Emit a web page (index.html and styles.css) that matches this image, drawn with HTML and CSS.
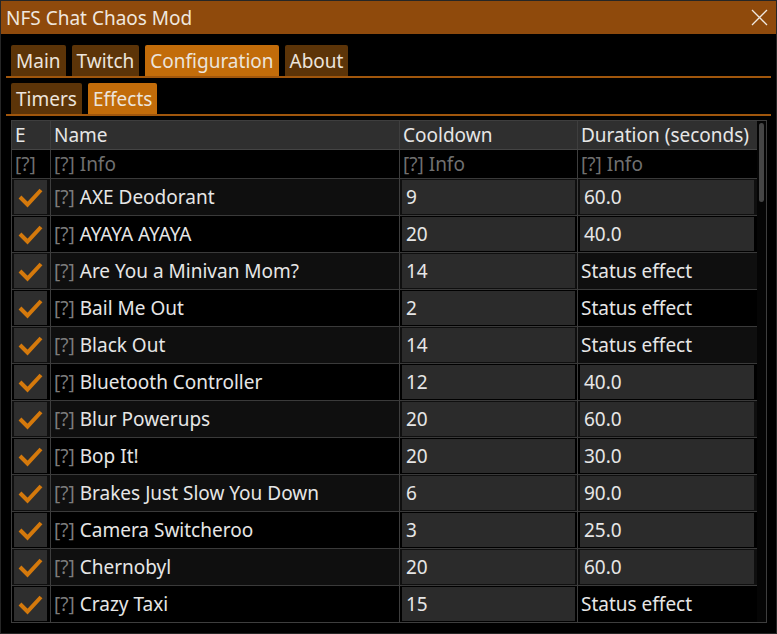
FILE: index.html
```html
<!DOCTYPE html>
<html>
<head>
<meta charset="utf-8">
<link rel="stylesheet" href="styles.css">
</head>
<body>
<div class="window">
  <div class="titlebar">
    <span class="title">NFS Chat Chaos Mod</span>
    <svg class="close" width="17" height="17" viewBox="0 0 17 17"><path d="M1 1 L16 16 M16 1 L1 16" stroke="#f0e8e0" stroke-width="1.3" fill="none"/></svg>
  </div>
  <div class="content">
    <div class="tabbar">
      <div class="tab">Main</div>
      <div class="tab">Twitch</div>
      <div class="tab active">Configuration</div>
      <div class="tab">About</div>
    </div>
    <div class="tabbar sub">
      <div class="tab">Timers</div>
      <div class="tab active">Effects</div>
    </div>
    <div class="table">
      <div class="grid">
        <div class="row head">
          <div class="c">E</div><div class="c">Name</div><div class="c">Cooldown</div><div class="c last">Duration (seconds)</div>
        </div>
        <div class="row info">
          <div class="c">[?]</div><div class="c">[?] Info</div><div class="c">[?] Info</div><div class="c last">[?] Info</div>
        </div>

        <div class="row alt">
          <div class="c cb"><span class="check"><svg viewBox="0 0 33 34" width="33" height="34"><polyline points="6,17 13.5,24.5 27,10" /></svg></span></div>
          <div class="c"><span class="q">[?]</span>AXE Deodorant</div>
          <div class="c inp"><span class="field">9</span></div>
          <div class="c inp last"><span class="field">60.0</span></div>
        </div>
        <div class="row">
          <div class="c cb"><span class="check"><svg viewBox="0 0 33 34" width="33" height="34"><polyline points="6,17 13.5,24.5 27,10" /></svg></span></div>
          <div class="c"><span class="q">[?]</span>AYAYA AYAYA</div>
          <div class="c inp"><span class="field">20</span></div>
          <div class="c inp last"><span class="field">40.0</span></div>
        </div>
        <div class="row alt">
          <div class="c cb"><span class="check"><svg viewBox="0 0 33 34" width="33" height="34"><polyline points="6,17 13.5,24.5 27,10" /></svg></span></div>
          <div class="c"><span class="q">[?]</span>Are You a Minivan Mom?</div>
          <div class="c inp"><span class="field">14</span></div>
          <div class="c last">Status effect</div>
        </div>
        <div class="row">
          <div class="c cb"><span class="check"><svg viewBox="0 0 33 34" width="33" height="34"><polyline points="6,17 13.5,24.5 27,10" /></svg></span></div>
          <div class="c"><span class="q">[?]</span>Bail Me Out</div>
          <div class="c inp"><span class="field">2</span></div>
          <div class="c last">Status effect</div>
        </div>
        <div class="row alt">
          <div class="c cb"><span class="check"><svg viewBox="0 0 33 34" width="33" height="34"><polyline points="6,17 13.5,24.5 27,10" /></svg></span></div>
          <div class="c"><span class="q">[?]</span>Black Out</div>
          <div class="c inp"><span class="field">14</span></div>
          <div class="c last">Status effect</div>
        </div>
        <div class="row">
          <div class="c cb"><span class="check"><svg viewBox="0 0 33 34" width="33" height="34"><polyline points="6,17 13.5,24.5 27,10" /></svg></span></div>
          <div class="c"><span class="q">[?]</span>Bluetooth Controller</div>
          <div class="c inp"><span class="field">12</span></div>
          <div class="c inp last"><span class="field">40.0</span></div>
        </div>
        <div class="row alt">
          <div class="c cb"><span class="check"><svg viewBox="0 0 33 34" width="33" height="34"><polyline points="6,17 13.5,24.5 27,10" /></svg></span></div>
          <div class="c"><span class="q">[?]</span>Blur Powerups</div>
          <div class="c inp"><span class="field">20</span></div>
          <div class="c inp last"><span class="field">60.0</span></div>
        </div>
        <div class="row">
          <div class="c cb"><span class="check"><svg viewBox="0 0 33 34" width="33" height="34"><polyline points="6,17 13.5,24.5 27,10" /></svg></span></div>
          <div class="c"><span class="q">[?]</span>Bop It!</div>
          <div class="c inp"><span class="field">20</span></div>
          <div class="c inp last"><span class="field">30.0</span></div>
        </div>
        <div class="row alt">
          <div class="c cb"><span class="check"><svg viewBox="0 0 33 34" width="33" height="34"><polyline points="6,17 13.5,24.5 27,10" /></svg></span></div>
          <div class="c"><span class="q">[?]</span>Brakes Just Slow You Down</div>
          <div class="c inp"><span class="field">6</span></div>
          <div class="c inp last"><span class="field">90.0</span></div>
        </div>
        <div class="row">
          <div class="c cb"><span class="check"><svg viewBox="0 0 33 34" width="33" height="34"><polyline points="6,17 13.5,24.5 27,10" /></svg></span></div>
          <div class="c"><span class="q">[?]</span>Camera Switcheroo</div>
          <div class="c inp"><span class="field">3</span></div>
          <div class="c inp last"><span class="field">25.0</span></div>
        </div>
        <div class="row alt">
          <div class="c cb"><span class="check"><svg viewBox="0 0 33 34" width="33" height="34"><polyline points="6,17 13.5,24.5 27,10" /></svg></span></div>
          <div class="c"><span class="q">[?]</span>Chernobyl</div>
          <div class="c inp"><span class="field">20</span></div>
          <div class="c inp last"><span class="field">60.0</span></div>
        </div>
        <div class="row final">
          <div class="c cb"><span class="check"><svg viewBox="0 0 33 34" width="33" height="34"><polyline points="6,17 13.5,24.5 27,10" /></svg></span></div>
          <div class="c"><span class="q">[?]</span>Crazy Taxi</div>
          <div class="c inp"><span class="field">15</span></div>
          <div class="c last">Status effect</div>
        </div>
      </div>
      <div class="scrollbar"><div class="grab"></div></div>
    </div>
  </div>
</div>
</body>
</html>
```
FILE: styles.css
```css
html, body {
  margin: 0;
  padding: 0;
  background: #000;
}
body {
  font-family: "Noto Sans", "Open Sans", sans-serif;
  font-size: 19px;
  line-height: 24px;
  color: #e6e6e6;
}
.window {
  width: 777px;
  height: 634px;
  box-sizing: border-box;
  border: 1px solid #262626;
  background: #000;
  overflow: hidden;
  display: flex;
  flex-direction: column;
}
.titlebar {
  height: 33px;
  flex: none;
  background: #8f4a0c;
  display: flex;
  align-items: center;
  justify-content: space-between;
  padding: 0 8px 0 5px;
}
.title {
  color: #efe7df;
  padding-top: 1px;
}
.close {
  display: block;
}
.content {
  padding: 11px 5px 0 5px;
  display: flex;
  flex-direction: column;
}
.tabbar {
  display: flex;
  gap: 6px;
  padding-left: 5px;
  border-bottom: 2px solid #a0560c;
}
.tabbar.sub {
  margin-top: 5px;
}
.tab {
  height: 31px;
  box-sizing: border-box;
  padding: 4px 5px 0 5px;
  background: #5c3408;
  color: #ece4dc;
  border-radius: 2px 2px 0 0;
}
.tab.active {
  background: #c26c0a;
}
.table {
  margin: 4px 0 0 5px;
  width: 756px;
  box-sizing: border-box;
  border: 1px solid #3e3e3e;
  display: flex;
}
.grid {
  width: 745px;
  display: flex;
  flex-direction: column;
}
.row {
  display: grid;
  grid-template-columns: 39px 349px 178px 179px;
  height: 37px;
  box-sizing: border-box;
  border-bottom: 1px solid #3a3a3a;
}
.row.final {
  height: 36px;
  border-bottom: none;
}
.row.alt {
  background: #0f0f0f;
}
.row.head {
  height: 29px;
  background: #2f2f2f;
  border-bottom-color: #444;
}
.row.info {
  height: 29px;
  color: #707070;
}
.c {
  border-right: 1px solid #3e3e3e;
  padding: 0 0 1px 3px;
  display: flex;
  align-items: center;
  white-space: pre;
  overflow: hidden;
}
.row.head .c,
.row.info .c {
  padding-bottom: 0;
}
.c.last {
  border-right: none;
}
.c.cb {
  padding: 1px 0 0 2px;
  align-items: flex-start;
}
.check {
  display: block;
  width: 33px;
  height: 34px;
  background: #2e2e2e;
}
.check svg {
  display: block;
}
.check polyline {
  fill: none;
  stroke: #d4790c;
  stroke-width: 4;
  stroke-linejoin: miter;
}
.q {
  color: #7c7c7c;
  margin-right: 5px;
}
.c.inp {
  padding: 1px 2px 1px 2px;
  align-items: stretch;
}
.c.inp.last {
  padding-right: 3px;
}
.field {
  flex: 1;
  background: #2b2b2b;
  padding: 0 0 1px 4px;
  display: flex;
  align-items: center;
}
.scrollbar {
  width: 9px;
  background: #050505;
  position: relative;
}
.grab {
  margin: 2px 0 0 2px;
  width: 5px;
  height: 79px;
  border-radius: 3px;
  background: #454545;
}
```
